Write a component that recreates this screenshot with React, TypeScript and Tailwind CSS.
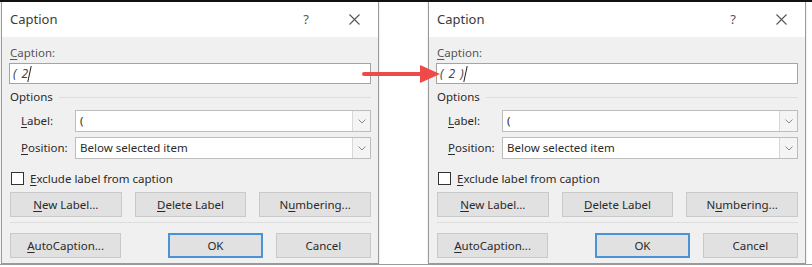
import React from 'react'

type DialogProps = { caption: string }

function Key({ children }: { children: React.ReactNode }) {
  return <span className="underline underline-offset-2">{children}</span>
}

function Btn({ children, primary = false, className = '' }: { children: React.ReactNode; primary?: boolean; className?: string }) {
  return (
    <div
      className={`h-[25px] flex items-center justify-center bg-[#e1e1e1] text-[11.5px] text-[#2a2a2a] ${
        primary ? 'border-2 border-[#4a93d6]' : 'border border-[#c9c9c9]'
      } ${className}`}
    >
      {children}
    </div>
  )
}

function Select({ value }: { value: string }) {
  return (
    <div className="flex-1 h-[22px] flex bg-white border border-[#bdbdbd]">
      <div className="flex-1 pl-[4px] flex items-center text-[11.5px] text-[#2a2a2a]">{value}</div>
      <div className="w-[18px] border-l border-[#d8d8d8] bg-[#f4f4f4] flex items-center justify-center">
        <svg width="8" height="5" viewBox="0 0 8 5">
          <path d="M0.5 0.5 L4 4 L7.5 0.5" fill="none" stroke="#8a8a8a" strokeWidth="1" />
        </svg>
      </div>
    </div>
  )
}

function CaptionDialog({ caption }: DialogProps) {
  return (
    <div className="w-[378px] h-[262px] flex flex-col border-x border-b border-[#9a9a9a] shadow-[0_0_2px_rgba(0,0,0,0.15)]">
      <div className="h-[35px] bg-white flex items-center pl-[8px] pr-[18px] shrink-0">
        <span className="text-[13px] text-[#3a3a3a] flex-1">Caption</span>
        <span className="text-[13px] text-[#555] mr-[40px]">?</span>
        <svg width="11" height="11" viewBox="0 0 11 11">
          <path d="M0.5 0.5 L10.5 10.5 M10.5 0.5 L0.5 10.5" stroke="#555" strokeWidth="1.1" />
        </svg>
      </div>
      <div className="flex-1 bg-[#f0f0f0] px-[7px] pt-[8px] flex flex-col text-[11.5px] text-[#2a2a2a]">
        <div className="h-[16px] flex items-center pl-[1px] text-[#555]">
          <Key>C</Key>aption:
        </div>
        <div className="mt-[2px] h-[21px] bg-white border border-[#a4a4a4] flex items-center pl-[3px] italic text-[12px] text-[#444] tracking-[1px]">
          <span className="whitespace-pre">{caption}</span>
          <span className="w-px h-[16px] bg-[#222] -skew-x-12" />
        </div>
        <div className="mt-[6px] h-[14px] flex items-center gap-[6px] pl-[1px]">
          <span>Options</span>
          <div className="flex-1 h-px bg-[#dedede]" />
        </div>
        <div className="mt-[6px] flex items-center">
          <span className="w-[66px] pl-[12px]">
            <Key>L</Key>abel:
          </span>
          <Select value="(" />
        </div>
        <div className="mt-[5px] flex items-center">
          <span className="w-[66px] pl-[12px]">
            <Key>P</Key>osition:
          </span>
          <Select value="Below selected item" />
        </div>
        <div className="mt-[11px] flex items-center gap-[6px] pl-[2px]">
          <div className="w-[13px] h-[13px] bg-white border border-[#333]" />
          <span>
            <Key>E</Key>xclude label from caption
          </span>
        </div>
        <div className="mt-[5px] grid grid-cols-3 gap-[13px] pl-[1px]">
          <Btn>
            <Key>N</Key>ew Label...
          </Btn>
          <Btn>
            <Key>D</Key>elete Label
          </Btn>
          <Btn>
            N<Key>u</Key>mbering...
          </Btn>
        </div>
        <div className="mt-[5px] h-px bg-[#dddddd] ml-[1px]" />
        <div className="mt-[10px] flex items-center pl-[1px]">
          <Btn className="w-[112px]">
            <Key>A</Key>utoCaption...
          </Btn>
          <Btn primary className="w-[95px] ml-[47px]">
            OK
          </Btn>
          <Btn className="w-[96px] ml-[13px]">Cancel</Btn>
        </div>
      </div>
    </div>
  )
}

export default function App() {
  return (
    <div className="w-[812px] h-[267px] bg-white relative overflow-hidden border-t-2 border-[#111] font-['Noto_Sans',sans-serif]">
      <div className="flex pl-px gap-[49px]">
        <CaptionDialog caption="( 2" />
        <CaptionDialog caption="( 2 )" />
      </div>
      <div className="absolute left-0 right-0 bottom-[2px] h-px bg-[#9a9a9a]" />
      <svg className="absolute left-[362px] top-[61px]" width="80" height="22" viewBox="0 0 80 22">
        <path d="M2 11 L62 11" stroke="#ef4a4a" strokeWidth="4" strokeLinecap="round" />
        <path d="M58 2 L78 11 L58 20 Z" fill="#ef4a4a" />
      </svg>
    </div>
  )
}
